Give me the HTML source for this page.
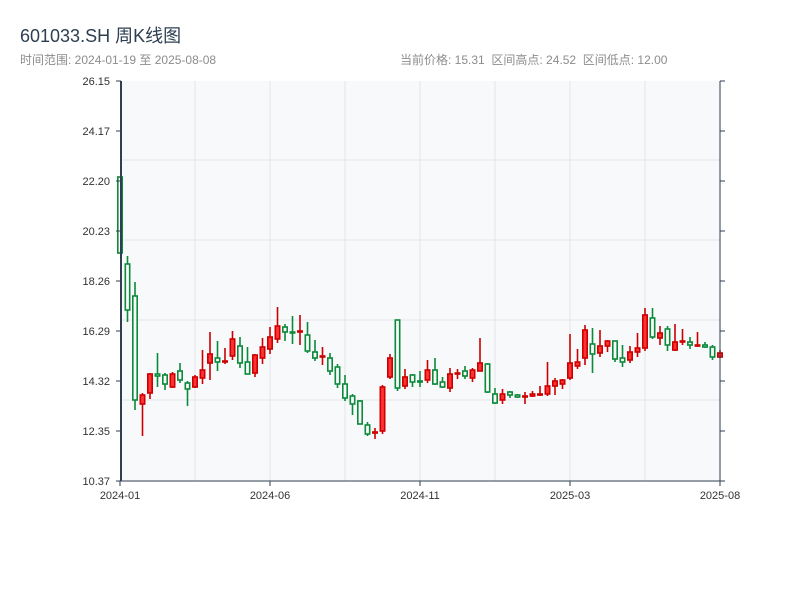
<!DOCTYPE html>
<html><head><meta charset="utf-8"><style>
body{margin:0;width:800px;height:600px;background:#fff;overflow:hidden;font-family:"Liberation Sans","Noto Sans CJK SC",sans-serif;}
.t{position:absolute;left:20px;top:22px;font-size:18px;color:#2c3e50;}
.s{position:absolute;top:51px;font-size:12px;color:#8c8c8c;}
</style></head><body>
<div class="t">601033.SH 周K线图</div>
<div class="s" style="left:20px">时间范围: 2024-01-19 至 2025-08-08</div>
<div class="s" style="left:400px">当前价格: 15.31&nbsp;&nbsp;区间高点: 24.52&nbsp;&nbsp;区间低点: 12.00</div>
<svg id="c" width="800" height="600" style="position:absolute;left:0;top:0" xmlns="http://www.w3.org/2000/svg" font-family="Liberation Sans, sans-serif" font-size="11" fill="#333"></svg>
<script>
var d=[
['g',177,253,177,253],['g',264,310,256,322],['g',296,400,282,410],['r',395,404,393,436],['r',374,393,373,399],
['g',374,376,353,387],['g',375,384,373,390],['r',374,387,372,388],['g',371,380,363,383],['g',383,389,381,406],
['r',377,387,375,388],['r',370,378,350,384],['r',354,363,332,380],['g',358,362,341,371],['r',361,362,348,364],
['r',339,356,331,360],['g',346,363,337,368],['g',362,374,347,374],['r',355,373,354,377],['r',347,358,338,364],
['r',337,349,327,354],['r',326,339,307,343],['g',327,332,324,341],['g',332,333,316,344],['r',331,332,315,345],
['g',335,351,322,353],['g',352,358,340,361],['r',356,357,347,365],['g',358,371,353,375],['g',367,384,364,388],
['g',384,398,375,401],['g',396,404,394,415],['g',401,424,400,424],['g',425,434,422,436],['r',432,433,428,439],
['r',387,431,385,434],['r',358,377,354,379],['g',320,388,320,391],['r',377,386,369,389],['g',375,382,374,387],
['g',381,382,371,387],['r',370,380,360,383],['g',370,384,358,385],['g',382,387,377,388],['r',374,388,368,392],
['r',373,374,369,379],['g',371,376,366,379],['r',370,378,368,382],['r',363,371,338,371],['g',364,392,363,393],
['g',394,403,388,404],['r',394,400,389,404],['g',392,395,391,398],['g',395,397,394,398],['r',396,396,392,404],
['r',394,396,391,397],['r',394,395,386,396],['r',386,394,362,396],['r',381,386,378,395],['r',380,384,379,389],
['r',363,378,334,380],['r',362,366,349,369],['r',330,358,325,365],['g',344,354,328,373],['r',346,353,330,357],
['r',341,346,340,352],['g',341,359,341,362],['g',358,362,345,367],['r',352,360,346,363],['r',348,352,333,357],
['r',315,348,308,351],['g',318,337,308,339],['r',333,338,326,345],['g',329,345,326,351],['r',342,350,324,351],
['r',341,342,329,345],['g',342,345,337,349],['r',345,346,332,347],['g',345,347,342,348],['g',347,357,345,360],
['r',353,357,350,358]];
var s='<rect x="121" y="81" width="600" height="400" fill="#f8f9fb"/>';
[160,240,320,400].forEach(function(y){s+='<line x1="121" x2="720" y1="'+y+'" y2="'+y+'" stroke="#e3e5ea"/>';});
[195,270,345,420,495,570,645].forEach(function(x){s+='<line y1="81" y2="481" x1="'+x+'" x2="'+x+'" stroke="#e3e5ea"/>';});
d.forEach(function(c,i){var x=120+7.5*i,col=c[0]=='g'?'#0a8a3a':'#cc0000',f=c[0]=='g'?'#f8f9fb':'#ff3333';
var t=Math.min(c[1],c[2]),h=Math.max(Math.abs(c[2]-c[1]),1);
s+='<line x1="'+x+'" x2="'+x+'" y1="'+c[3]+'" y2="'+c[4]+'" stroke="'+col+'" stroke-width="1.6"/>';
s+='<rect x="'+(x-2.2)+'" y="'+t+'" width="4.4" height="'+h+'" fill="'+f+'" stroke="'+col+'" stroke-width="1.6"/>';});
s+='<line x1="121" x2="121" y1="81" y2="481" stroke="#2f3e50" stroke-width="2"/>';
s+='<line x1="720" x2="720" y1="81" y2="481" stroke="#2f3e50" stroke-width="1"/>';
s+='<line x1="120" x2="721" y1="481" y2="481" stroke="#2f3e50" stroke-width="1"/>';
var L=['26.15','24.17','22.20','20.23','18.26','16.29','14.32','12.35','10.37'];
L.forEach(function(l,i){var y=81+50*i;s+='<line x1="116" x2="121" y1="'+y+'" y2="'+y+'" stroke="#2f3e50"/><line x1="720" x2="725" y1="'+y+'" y2="'+y+'" stroke="#2f3e50"/><text x="110" y="'+(y+4)+'" text-anchor="end">'+l+'</text>';});
['2024-01','2024-06','2024-11','2025-03','2025-08'].forEach(function(l,i){var x=120+150*i;s+='<line x1="'+x+'" x2="'+x+'" y1="481" y2="486" stroke="#2f3e50"/><text x="'+x+'" y="499" text-anchor="middle">'+l+'</text>';});
document.getElementById('c').innerHTML=s;
</script>
</body></html>
